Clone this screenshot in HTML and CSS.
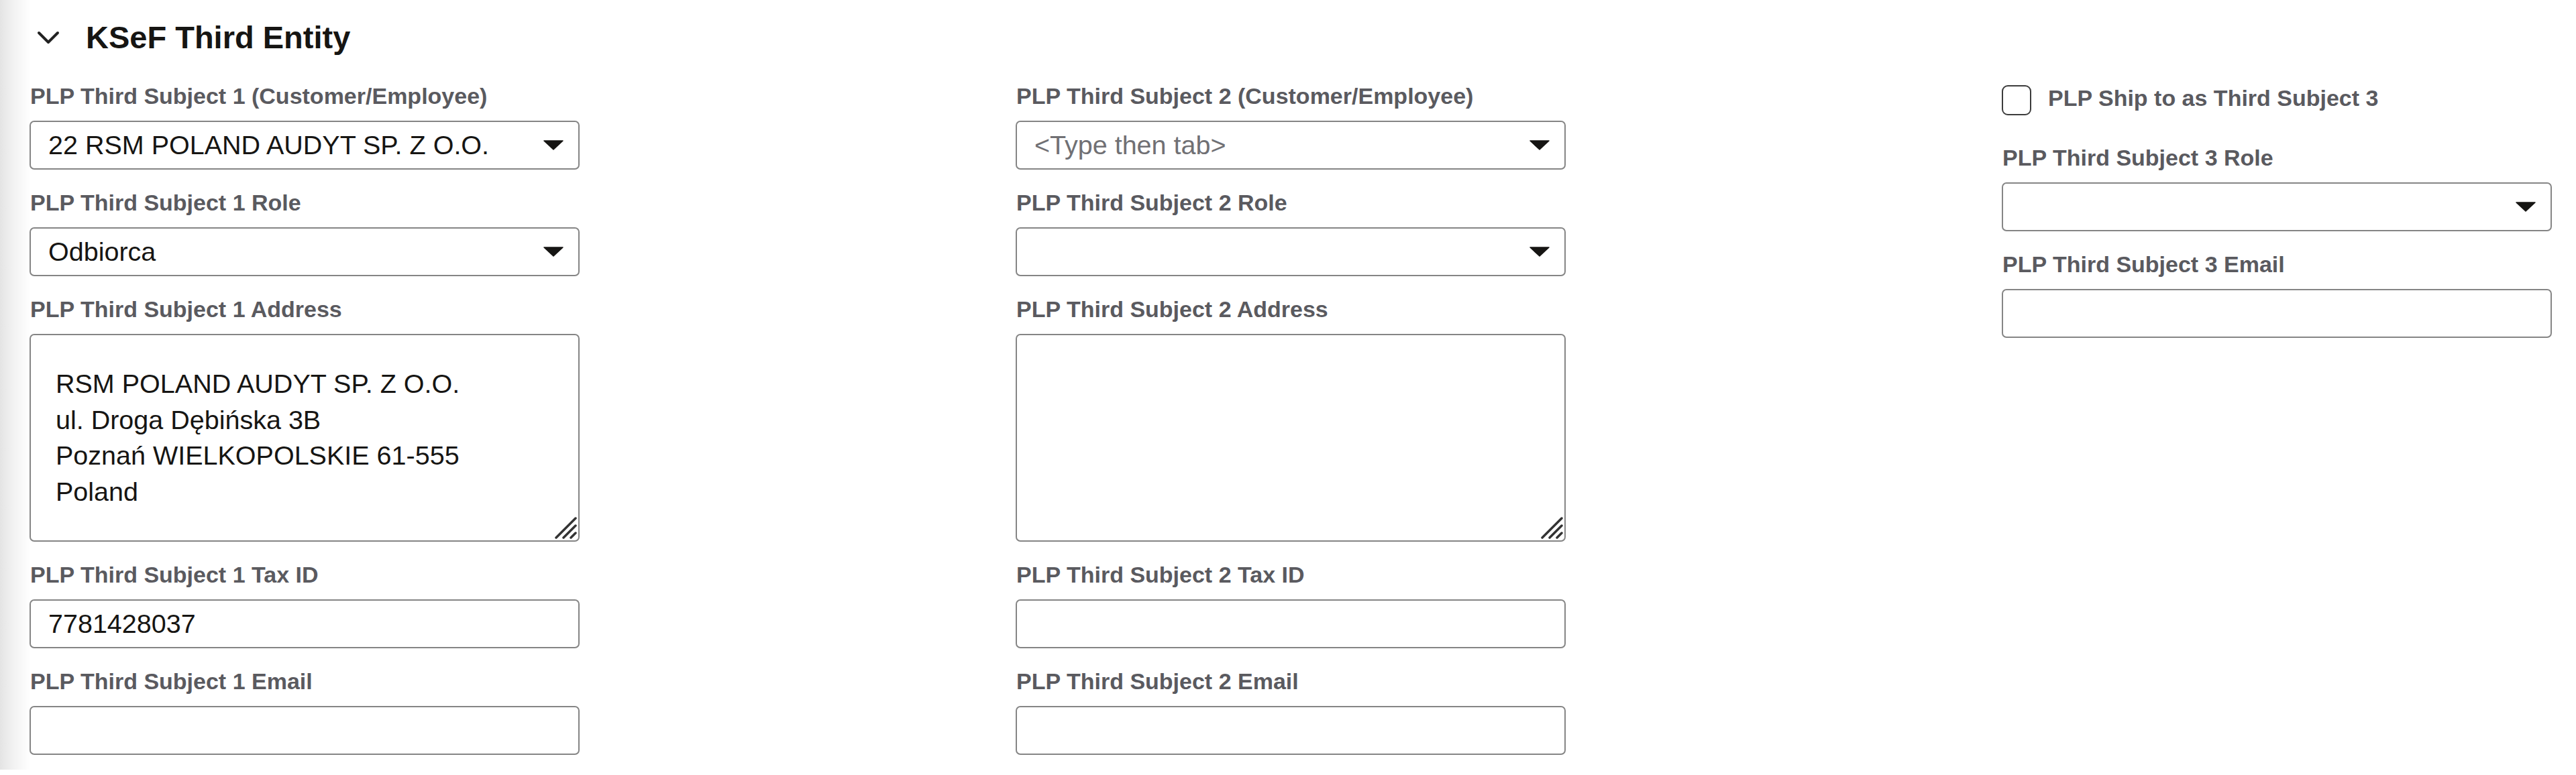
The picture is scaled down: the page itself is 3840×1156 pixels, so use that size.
FILE: index.html
```html
<!DOCTYPE html>
<html lang="en">
<head>
    <meta charset="UTF-8">
    <title>KSeF Third Entity</title>
    <link rel="stylesheet" href="styles.css">
</head>
<body>
    <div class="page">
        <div class="section-header">
            <svg class="chevron" viewBox="0 0 34 20" width="34" height="20">
                <polyline points="3,3 17,17 31,3" fill="none" stroke="#222" stroke-width="4" stroke-linecap="round" stroke-linejoin="round"/>
            </svg>
            <h2 class="section-title">KSeF Third Entity</h2>
        </div>

        <div class="form-grid">
            <div class="column">
                <div class="field">
                    <label>PLP Third Subject 1 (Customer/Employee)</label>
                    <div class="combo">
                        <input type="text" value="22 RSM POLAND AUDYT SP. Z O.O.">
                        <svg class="arrow" viewBox="0 0 30 15" width="30" height="15"><path d="M1 1 H29 L15 14 Z" fill="#161513" stroke="#161513" stroke-width="1.5" stroke-linejoin="round"/></svg>
                    </div>
                </div>
                <div class="field">
                    <label>PLP Third Subject 1 Role</label>
                    <div class="combo">
                        <input type="text" value="Odbiorca">
                        <svg class="arrow" viewBox="0 0 30 15" width="30" height="15"><path d="M1 1 H29 L15 14 Z" fill="#161513" stroke="#161513" stroke-width="1.5" stroke-linejoin="round"/></svg>
                    </div>
                </div>
                <div class="field">
                    <label>PLP Third Subject 1 Address</label>
                    <div class="area-wrap">
                        <textarea class="area">RSM POLAND AUDYT SP. Z O.O.
ul. Droga Dębińska 3B
Poznań WIELKOPOLSKIE 61-555
Poland</textarea>
                        <svg class="resizer" viewBox="0 0 36 36" width="36" height="36">
                            <line x1="5" y1="34" x2="34" y2="5"/>
                            <line x1="16" y1="34" x2="34" y2="16"/>
                            <line x1="27" y1="34" x2="34" y2="27"/>
                        </svg>
                    </div>
                </div>
                <div class="field">
                    <label>PLP Third Subject 1 Tax ID</label>
                    <input class="text-input" type="text" value="7781428037">
                </div>
                <div class="field">
                    <label>PLP Third Subject 1 Email</label>
                    <input class="text-input" type="text">
                </div>
            </div>

            <div class="column">
                <div class="field">
                    <label>PLP Third Subject 2 (Customer/Employee)</label>
                    <div class="combo">
                        <input type="text" placeholder="&lt;Type then tab&gt;">
                        <svg class="arrow" viewBox="0 0 30 15" width="30" height="15"><path d="M1 1 H29 L15 14 Z" fill="#161513" stroke="#161513" stroke-width="1.5" stroke-linejoin="round"/></svg>
                    </div>
                </div>
                <div class="field">
                    <label>PLP Third Subject 2 Role</label>
                    <div class="combo">
                        <input type="text">
                        <svg class="arrow" viewBox="0 0 30 15" width="30" height="15"><path d="M1 1 H29 L15 14 Z" fill="#161513" stroke="#161513" stroke-width="1.5" stroke-linejoin="round"/></svg>
                    </div>
                </div>
                <div class="field">
                    <label>PLP Third Subject 2 Address</label>
                    <div class="area-wrap">
                        <textarea class="area"></textarea>
                        <svg class="resizer" viewBox="0 0 36 36" width="36" height="36">
                            <line x1="5" y1="34" x2="34" y2="5"/>
                            <line x1="16" y1="34" x2="34" y2="16"/>
                            <line x1="27" y1="34" x2="34" y2="27"/>
                        </svg>
                    </div>
                </div>
                <div class="field">
                    <label>PLP Third Subject 2 Tax ID</label>
                    <input class="text-input" type="text">
                </div>
                <div class="field">
                    <label>PLP Third Subject 2 Email</label>
                    <input class="text-input" type="text">
                </div>
            </div>

            <div class="column">
                <div class="check-row">
                    <span class="checkbox"></span>
                    <span class="check-label">PLP Ship to as Third Subject 3</span>
                </div>
                <div class="field">
                    <label>PLP Third Subject 3 Role</label>
                    <div class="combo">
                        <input type="text">
                        <svg class="arrow" viewBox="0 0 30 15" width="30" height="15"><path d="M1 1 H29 L15 14 Z" fill="#161513" stroke="#161513" stroke-width="1.5" stroke-linejoin="round"/></svg>
                    </div>
                </div>
                <div class="field">
                    <label>PLP Third Subject 3 Email</label>
                    <input class="text-input" type="text">
                </div>
            </div>
        </div>
    </div>
</body>
</html>
```

FILE: styles.css
```css
body {
    margin: 0;
    background-color: #fff;
    font-family: "Liberation Sans", Arial, sans-serif;
    color: #161513;
}
.page {
    height: 1148px;
    background: linear-gradient(to right, #e4e4e4 0px, #f2f2f2 20px, #fff 46px);
}
.section-header {
    display: flex;
    align-items: center;
    padding: 28px 0 0 55px;
    height: 56px;
}
.chevron {
    display: block;
    margin-right: 39px;
}
.section-title {
    margin: 0;
    font-size: 47px;
    line-height: 56px;
    font-weight: bold;
    color: #161513;
}
.form-grid {
    display: grid;
    grid-template-columns: repeat(3, 820px);
    justify-content: space-between;
    padding: 0 36px 0 44px;
    margin-top: 39px;
}
.column {
    display: flex;
    flex-direction: column;
    gap: 29px;
}
.field {
    display: flex;
    flex-direction: column;
}
label, .check-label {
    font-size: 34px;
    line-height: 40px;
    font-weight: bold;
    color: #5a5a5f;
}
label {
    margin-bottom: 17px;
    padding-left: 1px;
}
.combo, .text-input {
    box-sizing: border-box;
    width: 100%;
    height: 73px;
    border: 2px solid #858585;
    border-radius: 7px;
    background-color: #fff;
}
.combo {
    display: flex;
    align-items: center;
    padding: 0 22px 0 26px;
}
.combo input {
    flex: 1;
    min-width: 0;
    border: none;
    outline: none;
    padding: 0;
    background: transparent;
    font-family: inherit;
    font-size: 39.5px;
    color: #161513;
}
.combo input::placeholder {
    color: #707074;
}
.arrow {
    display: block;
    flex-shrink: 0;
}
.text-input {
    padding: 0 26px;
    font-family: inherit;
    font-size: 39.5px;
    color: #161513;
    outline: none;
}
.area-wrap {
    position: relative;
}
.area {
    display: block;
    box-sizing: border-box;
    width: 100%;
    height: 310px;
    border: 2px solid #858585;
    border-radius: 7px;
    padding: 46px 37px 0 37px;
    font-family: inherit;
    font-size: 39.5px;
    line-height: 53.5px;
    color: #161513;
    resize: none;
    overflow: hidden;
    outline: none;
}
.resizer {
    position: absolute;
    right: 4px;
    bottom: 4px;
    stroke: #333;
    stroke-width: 3.5;
    stroke-linecap: round;
}
.check-row {
    display: flex;
    align-items: center;
    height: 52px;
    margin-bottom: 11px;
}
.checkbox {
    box-sizing: border-box;
    width: 44px;
    height: 45px;
    border: 2.5px solid #3c3c3c;
    border-radius: 9px;
    background-color: #fff;
    margin-right: 25px;
}
.check-label {
    margin-bottom: 6px;
}
```
